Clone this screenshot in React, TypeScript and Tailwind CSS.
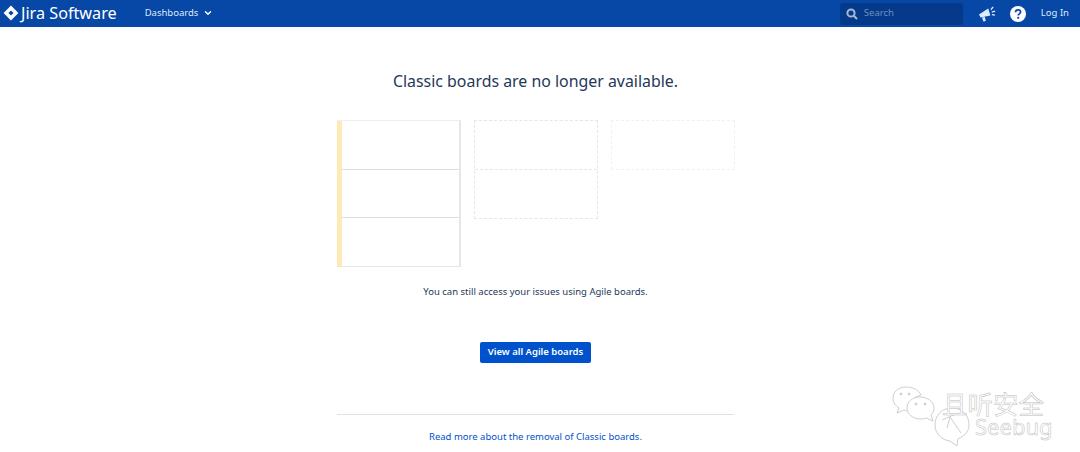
import React from "react";
import { ChevronDown } from "lucide-react";

const font = "font-['Noto_Sans','Noto_Sans_CJK_SC',sans-serif]";

function JiraMark() {
  return (
    <svg width="16" height="16" viewBox="0 0 16 16" fill="none">
      <path d="M8 0.6 L15.4 8 L8 15.4 L0.6 8 Z" fill="#ffffff" />
      <path d="M8 5.4 L10.6 8 L8 10.6 L5.4 8 Z" fill="#0747a6" />
    </svg>
  );
}

function Megaphone() {
  return (
    <svg width="18" height="18" viewBox="0 0 18 18" fill="#deebff">
      <path d="M1 9.5 L10.2 3.6 L12.4 10.6 L2.6 12.4 Z" />
      <path d="M4 12.4 L6.8 11.9 L7.8 16 L5.4 16.6 Z" />
      <path d="M12.4 4.2 L14.6 1.6 L15.6 2.4 L13.2 5.2 Z" />
      <path d="M13.6 6.6 L17 5.6 L17.3 6.8 L13.9 7.8 Z" />
      <path d="M14 9 L17 9.6 L16.8 10.8 L13.8 10.2 Z" />
    </svg>
  );
}

function Help() {
  return (
    <svg width="16" height="16" viewBox="0 0 16 16">
      <circle cx="8" cy="8" r="8" fill="#ffffff" />
      <path d="M5.5 6.2 C5.6 4.7 6.7 3.9 8.1 3.9 C9.6 3.9 10.6 4.8 10.6 6 C10.6 7.9 8.3 7.8 8.3 9.5" fill="none" stroke="#0747a6" strokeWidth="1.7" />
      <circle cx="8.2" cy="11.8" r="1.1" fill="#0747a6" />
    </svg>
  );
}

function Header() {
  return (
    <header className="flex h-[27px] items-center justify-between bg-[#0747a6] text-[#deebff]">
      <div className="flex items-center">
        <div className="ml-[3px] flex items-center gap-[2px]">
          <JiraMark />
          <span className="text-[16.2px] leading-none text-white">Jira Software</span>
        </div>
        <div className="ml-[28px] flex items-center gap-[5px] text-[9.5px]">
          <span>Dashboards</span>
          <ChevronDown size={10} strokeWidth={3.5} className="text-white" />
        </div>
      </div>
      <div className="flex items-center">
        <div className="flex h-[22px] w-[123px] items-center gap-[6px] rounded-[3px] bg-[#053a8a] pl-[6px] text-[9.5px] text-[#6f8fbe]">
          <svg width="12" height="12" viewBox="0 0 12 12" fill="none" stroke="#a5b8d6" strokeWidth="2">
            <circle cx="5" cy="5" r="3.6" />
            <path d="M7.8 7.8 L11 11" />
          </svg>
          <span>Search</span>
        </div>
        <div className="ml-[15px]"><Megaphone /></div>
        <div className="ml-[14px]"><Help /></div>
        <span className="ml-[15px] mr-[11px] text-[9.5px]">Log In</span>
      </div>
    </header>
  );
}

function Boards() {
  return (
    <div className="mt-[26px] grid h-[147px] grid-cols-[124px_124px_124px] gap-x-[13px]">
      <div className="flex h-[147px] flex-col border border-l-0 border-r-2 border-[#e6e6e6] border-t-[#eeeeee]">
        <div className="flex h-full flex-col border-l-[5px] border-[#fdeab5]">
          <div className="flex-1" />
          <div className="flex-1 border-y border-[#dfdfdf]" />
          <div className="flex-1" />
        </div>
      </div>
      <div className="flex h-[99px] flex-col border border-dashed border-[#e6e6e6]">
        <div className="flex-1 border-b border-dashed border-[#e6e6e6]" />
        <div className="flex-1" />
      </div>
      <div className="h-[50px] border border-dashed border-[#f1f1f1]" />
    </div>
  );
}

function Watermark() {
  return (
    <div className="pointer-events-none absolute bottom-0 left-[892px] h-[72px] w-[188px]">
      <svg width="188" height="72" viewBox="0 0 188 72" fill="white" stroke="#cfcfcf" strokeWidth="1" className="absolute left-0 top-0">
        <path d="M14 7 C6 7 1 12 1 18 C1 23 4 26 7 28 L5 33 L12 30 C14 31 16 31 18 31 C16 23 21 17 29 15 C27 10 21 7 14 7 Z" />
        <path d="M28 17 C20 17 15 22 15 28 C15 34 21 39 28 39 C30 39 32 39 34 38 L41 41 L39 35 C41 33 42 31 42 28 C42 22 36 17 28 17 Z" />
        <circle cx="9" cy="14" r="1" fill="#cccccc" />
        <circle cx="17" cy="14" r="1" fill="#cccccc" />
        <circle cx="24" cy="24" r="1" fill="#cccccc" />
        <circle cx="33" cy="24" r="1" fill="#cccccc" />
        <path d="M60 28 C50 28 43 35 43 45 C43 54 50 60 58 61 L65 66 L66 59 C72 56 77 52 77 45 C77 35 70 28 60 28 Z" />
        <path d="M50 40 L66 33 M58 37 L55 48 M58 37 L69 53" fill="none" />
      </svg>
      <span className="absolute left-[50px] top-[13px] whitespace-nowrap text-[25.5px] leading-[22px] text-white [-webkit-text-stroke:0.5px_#bdbdbd]">且听安全</span>
      <span className="absolute left-[83px] top-[35px] whitespace-nowrap text-[22px] leading-[22px] text-white [-webkit-text-stroke:0.5px_#bdbdbd]">Seebug</span>
    </div>
  );
}

export default function App() {
  return (
    <div className={`relative h-[452px] w-[1080px] overflow-hidden bg-white ${font}`}>
      <Header />
      <main className="ml-[337px] flex w-[397px] flex-col text-center text-[#172b4d]">
        <h1 className="mt-[42px] text-[15.9px] leading-[25px] text-[#253858]">Classic boards are no longer available.</h1>
        <Boards />
        <p className="mt-[17px] text-[9.5px] leading-[16px] text-[#253858]">You can still access your issues using Agile boards.</p>
        <div className="mt-[42px] flex justify-center">
          <button className="h-[21px] w-[111px] rounded-[2px] bg-[#0052cc] text-[9.5px] font-semibold text-white">View all Agile boards</button>
        </div>
        <div className="mt-[51px] border-t border-[#dfe1e6]" />
        <a className="mt-[14px] text-[9.5px] leading-[16px] text-[#0052cc]">Read more about the removal of Classic boards.</a>
      </main>
      <Watermark />
    </div>
  );
}
